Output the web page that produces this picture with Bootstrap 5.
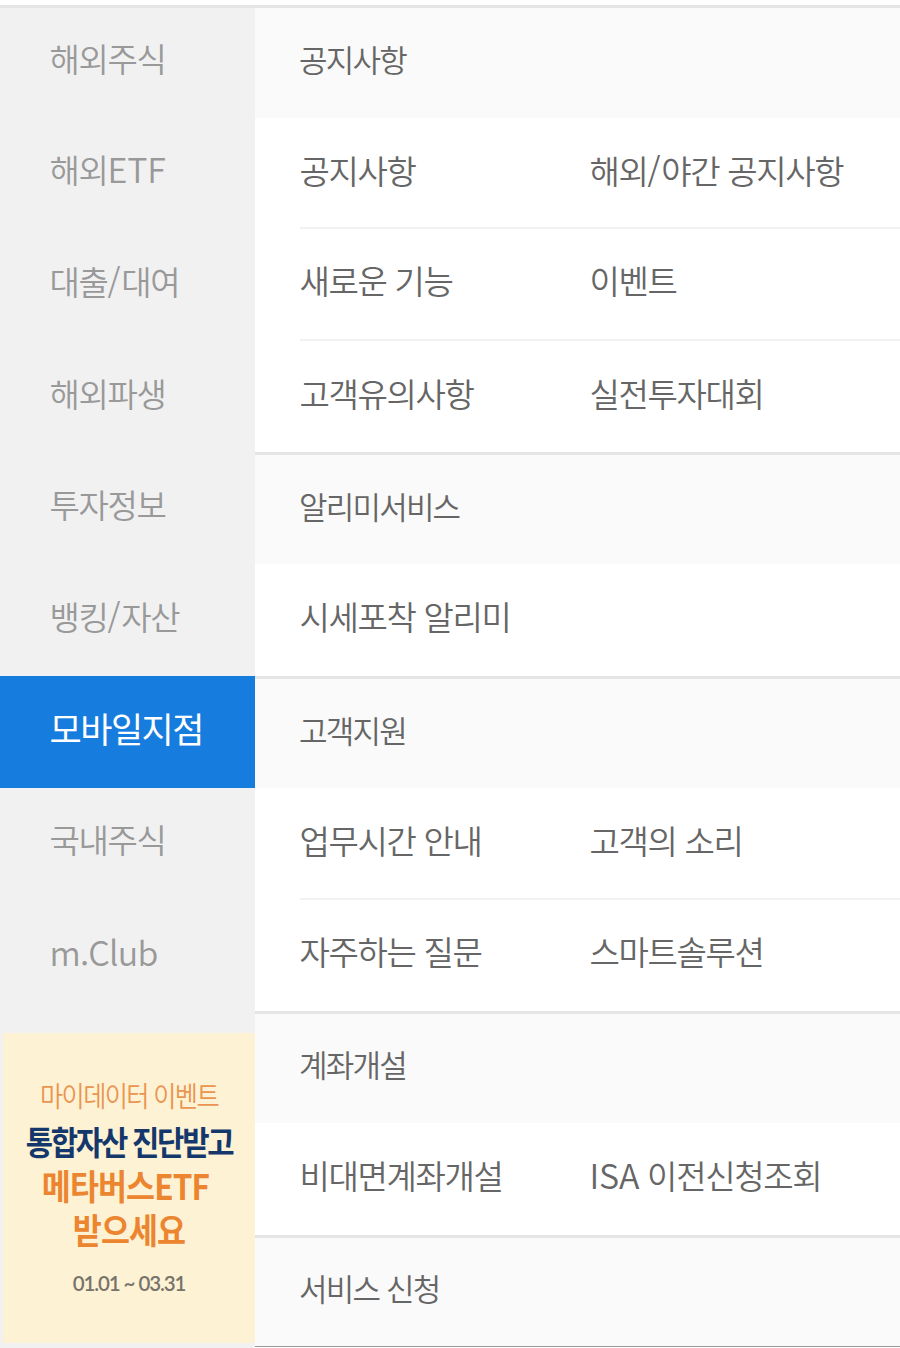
<!DOCTYPE html>
<html lang="ko">
<head>
  <meta charset="UTF-8">
  <meta name="viewport" content="width=device-width, initial-scale=1.0">
  <title>전체메뉴</title>
  <link href="https://cdn.jsdelivr.net/npm/bootstrap@5.3.2/dist/css/bootstrap.min.css" rel="stylesheet">
  <style>
    body {
      font-family: "Noto Sans CJK KR", sans-serif;
      background-color: #fff;
      color: #666;
      height: 1348px;
      overflow: hidden;
    }
    .menu-wrap {
      height: 1343px;
      margin-top: 5px;
      border-top: 3px solid #e5e5e5;
    }
    .side-menu {
      width: 255px;
      background-color: #f1f1f1;
    }
    .side-menu .nav {
      margin-top: -2px;
    }
    .side-menu .nav-link {
      height: 111.7px;
      padding: 0 0 7px 49.5px;
      font-size: 33px;
      font-weight: 350;
      letter-spacing: -1.35px;
      color: #999;
      border-radius: 0;
      white-space: nowrap;
    }
    .side-menu .nav-link.active {
      background-color: #167cde;
      color: #fff;
      font-size: 35px;
      font-weight: 400;
      letter-spacing: -1.5px;
    }
    .latin {
      font-size: 34px;
      line-height: 1;
      letter-spacing: -.2px;
    }
    .side-menu .latin-only {
      letter-spacing: -.8px;
    }
    .slash {
      letter-spacing: .8px;
    }
    .event-banner {
      width: 252px;
      height: 310px;
      margin: 22px 0 0 3px;
      padding-top: 42px;
      background-color: #fef2d5;
      white-space: nowrap;
    }
    /* condensed lettering of the banner */
    .event-name, .event-title, .event-gift {
      transform: scaleX(.9);
    }
    .event-name {
      font-size: 28px;
      line-height: 40px;
      font-weight: 350;
      letter-spacing: -1.8px;
      color: #ea9550;
    }
    .event-title {
      margin-top: 4px;
      font-size: 33px;
      line-height: 44px;
      font-weight: 700;
      letter-spacing: -2.5px;
      color: #14386b;
    }
    .event-gift {
      font-size: 35px;
      line-height: 44px;
      font-weight: 700;
      letter-spacing: -1px;
      color: #ec8530;
    }
    .event-date {
      margin-top: 20px;
      font-family: Lato, sans-serif;
      font-size: 20.5px;
      line-height: 24px;
      font-weight: 600;
      letter-spacing: -1.1px;
      color: #77736a;
    }
    .section-title {
      height: 110px;
      padding: 0 0 9.5px 44px;
      margin: 0;
      background-color: #fafafa;
      font-size: 31px;
      font-weight: 350;
      letter-spacing: -1.8px;
    }
    .menu-section + .menu-section .section-title {
      height: 112px;
      border-top: 3px solid #e5e5e5;
    }
    .menu-list {
      padding-left: 45px;
    }
    .menu-item {
      height: 112px;
      padding-bottom: 6.5px;
      font-size: 33px;
      font-weight: 350;
      letter-spacing: -1.35px;
      text-indent: -.5px;
      white-space: nowrap;
    }
    .menu-item:first-child:not(:last-child) {
      height: 109.4px;
      padding-bottom: 4.5px;
    }
    .menu-item:last-child:not(:first-child) {
      height: 113px;
    }
    .menu-item + .menu-item {
      border-top: 2px solid #f1f1f1;
    }
    .menu-item > span:first-child {
      width: 290px;
    }
    .menu-end {
      border-bottom: 1px solid #999;
      height: 1339px;
      overflow: hidden;
    }
  </style>
</head>
<body>
<div class="menu-wrap d-flex">
  <aside class="side-menu flex-shrink-0">
    <nav class="nav flex-column">
      <a class="nav-link d-flex align-items-center" href="#">해외주식</a>
      <a class="nav-link d-flex align-items-center" href="#"><span>해외<span class="latin">ETF</span></span></a>
      <a class="nav-link d-flex align-items-center" href="#"><span>대출<span class="slash">/</span>대여</span></a>
      <a class="nav-link d-flex align-items-center" href="#">해외파생</a>
      <a class="nav-link d-flex align-items-center" href="#">투자정보</a>
      <a class="nav-link d-flex align-items-center" href="#"><span>뱅킹<span class="slash">/</span>자산</span></a>
      <a class="nav-link active d-flex align-items-center" href="#">모바일지점</a>
      <a class="nav-link d-flex align-items-center" href="#">국내주식</a>
      <a class="nav-link d-flex align-items-center" href="#"><span class="latin latin-only">m.Club</span></a>
    </nav>
    <div class="event-banner text-center">
      <div class="event-name">마이데이터 이벤트</div>
      <div class="event-title">통합자산 진단받고</div>
      <div class="event-gift pe-2">메타버스ETF</div>
      <div class="event-gift">받으세요</div>
      <div class="event-date">01.01 ~ 03.31</div>
    </div>
  </aside>

  <main class="menu-end flex-grow-1">
    <section class="menu-section">
      <h2 class="section-title d-flex align-items-center">공지사항</h2>
      <div class="menu-list">
        <div class="menu-item d-flex align-items-center"><span>공지사항</span><span>해외<span class="slash">/</span>야간 공지사항</span></div>
        <div class="menu-item d-flex align-items-center"><span>새로운 기능</span><span>이벤트</span></div>
        <div class="menu-item d-flex align-items-center"><span>고객유의사항</span><span>실전투자대회</span></div>
      </div>
    </section>
    <section class="menu-section">
      <h2 class="section-title d-flex align-items-center">알리미서비스</h2>
      <div class="menu-list">
        <div class="menu-item d-flex align-items-center"><span>시세포착 알리미</span></div>
      </div>
    </section>
    <section class="menu-section">
      <h2 class="section-title d-flex align-items-center">고객지원</h2>
      <div class="menu-list">
        <div class="menu-item d-flex align-items-center"><span>업무시간 안내</span><span>고객의 소리</span></div>
        <div class="menu-item d-flex align-items-center"><span>자주하는 질문</span><span>스마트솔루션</span></div>
      </div>
    </section>
    <section class="menu-section">
      <h2 class="section-title d-flex align-items-center">계좌개설</h2>
      <div class="menu-list">
        <div class="menu-item d-flex align-items-center"><span>비대면계좌개설</span><span><span class="latin">ISA</span> 이전신청조회</span></div>
      </div>
    </section>
    <section class="menu-section">
      <h2 class="section-title d-flex align-items-center">서비스 신청</h2>
    </section>
  </main>
</div>
<script src="https://cdn.jsdelivr.net/npm/bootstrap@5.3.2/dist/js/bootstrap.bundle.min.js"></script>
</body>
</html>
